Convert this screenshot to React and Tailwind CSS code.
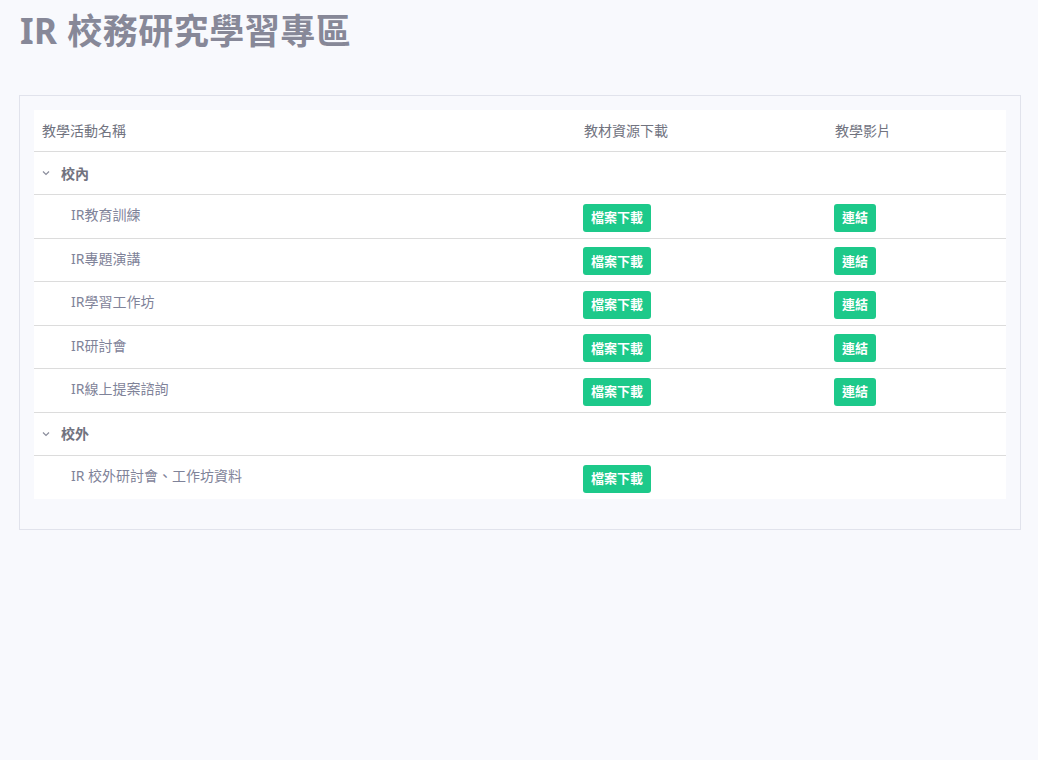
import React from "react";

const groups = [
  {
    name: "校內",
    items: [
      { name: "IR教育訓練", video: true },
      { name: "IR專題演講", video: true },
      { name: "IR學習工作坊", video: true },
      { name: "IR研討會", video: true },
      { name: "IR線上提案諮詢", video: true },
    ],
  },
  {
    name: "校外",
    items: [{ name: "IR 校外研討會、工作坊資料", video: false }],
  },
];

const Btn = ({ children }) => (
  <span className="inline-flex items-center h-[28px] px-[8px] rounded-[3px] bg-[#1dc98a] text-white text-[13px] font-semibold">
    {children}
  </span>
);

const Chevron = () => (
  <svg width="10" height="10" viewBox="0 0 10 10" className="text-[#8a8d9c]">
    <path d="M2 3.5 L5 6.5 L8 3.5" fill="none" stroke="currentColor" strokeWidth="1.2" />
  </svg>
);

export default function App() {
  return (
    <div
      className="min-h-[760px] bg-[#f8f9fd] px-[19px] pt-[8px]"
      style={{ fontFamily: '"Noto Sans", "Noto Sans CJK TC", sans-serif' }}
    >
      <h1 className="text-[35px] font-bold text-[#878898] leading-[46px] pl-[1px] tracking-[0.5px]">
        IR 校務研究學習專區
      </h1>
      <div className="mt-[41px] w-[1002px] border border-[#e1e3ec] px-[14px] pt-[14px] pb-[30px]">
        <div className="bg-white text-[14px] text-[#71737f]">
          <div className="flex h-[42px] items-center border-b border-[#dcdcdc]">
            <div className="w-[542px] pl-[8px]">教學活動名稱</div>
            <div className="w-[251px] pl-[8px]">教材資源下載</div>
            <div className="pl-[8px]">教學影片</div>
          </div>
          {groups.map((g, gi) => (
            <React.Fragment key={g.name}>
              <div className="flex h-[43px] items-center gap-[10px] border-b border-[#dcdcdc] pl-[7px] font-semibold">
                <Chevron />
                <span>{g.name}</span>
              </div>
              {g.items.map((it, i) => (
                <div
                  key={it.name}
                  className={
                    "flex h-[43.5px] items-center " +
                    (gi === groups.length - 1 && i === g.items.length - 1 ? "" : "border-b border-[#dcdcdc]")
                  }
                >
                  <div className="w-[542px] pl-[37px] text-[#7f8399] -mt-[3px]">{it.name}</div>
                  <div className="w-[251px] pl-[7px] pt-[3px]">
                    <Btn>檔案下載</Btn>
                  </div>
                  <div className="pl-[7px] pt-[3px]">{it.video && <Btn>連結</Btn>}</div>
                </div>
              ))}
            </React.Fragment>
          ))}
        </div>
      </div>
    </div>
  );
}
